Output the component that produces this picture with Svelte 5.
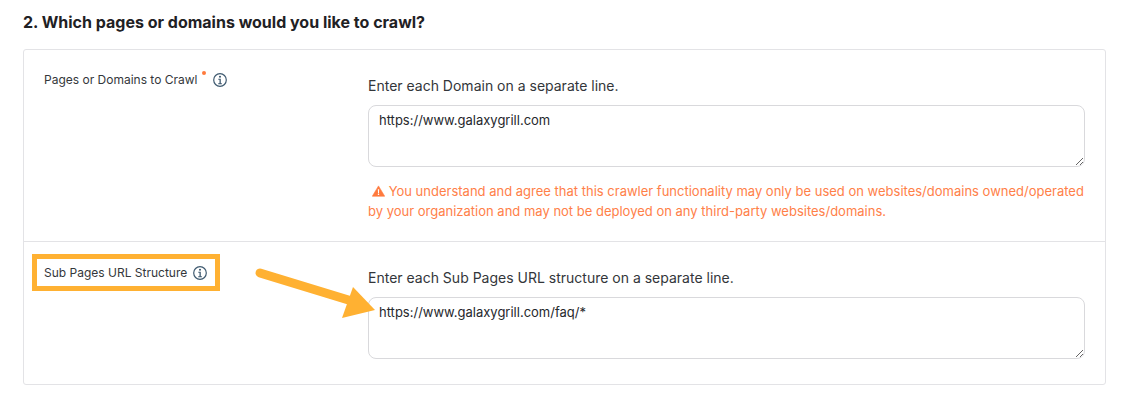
<script>
  const rows = [
    {
      label: 'Pages or Domains to Crawl',
      required: true,
      hint: 'Enter each Domain on a separate line.',
      value: 'https://www.galaxygrill.com',
      warning: 'You understand and agree that this crawler functionality may only be used on websites/domains owned/operated by your organization and may not be deployed on any third-party websites/domains.'
    },
    {
      label: 'Sub Pages URL Structure',
      required: false,
      hint: 'Enter each Sub Pages URL structure on a separate line.',
      value: 'https://www.galaxygrill.com/faq/*',
      highlight: true
    }
  ];
</script>

<div class="page">
  <h2>2. Which pages or domains would you like to crawl?</h2>
  <div class="card">
    {#each rows as row}
      <div class="row">
        <div class="label-col">
          <div class="label" class:highlight={row.highlight}>
            <span>{row.label}</span>
            {#if row.required}<i class="req"></i>{/if}
            <svg class="info" viewBox="0 0 14 14" width="14" height="14" aria-hidden="true">
              <circle cx="7" cy="7" r="6.300" fill="none" stroke="#3f5a70" stroke-width="1.200" />
              <circle cx="7" cy="3.800" r="1.050" fill="#3f5a70" />
              <path d="M5.300 5.800h2.500v4.400h1.100v1H5.200v-1h1.300V6.800H5.300z" fill="#3f5a70" />
            </svg>
          </div>
        </div>
        <div class="field">
          <p class="hint">{row.hint}</p>
          <textarea value={row.value}></textarea>
          {#if row.warning}
            <p class="warning">
              <svg viewBox="0 0 14 12" width="13" height="12" aria-hidden="true">
                <path d="M7 .5 13.700 11.700H.3z" fill="#ff7a3d" stroke="#ff7a3d" stroke-linejoin="round" stroke-width=".6" />
                <path d="M6.300 4h1.400l-.2 4.300h-1zM6.300 9h1.400v1.300H6.300z" fill="#fff" />
              </svg>
              {row.warning}
            </p>
          {/if}
        </div>
      </div>
    {/each}
  </div>

  <svg class="arrow" viewBox="0 0 130 60" width="130" height="60" aria-hidden="true">
    <path d="M8 11 103 40" fill="none" stroke="#ffb132" stroke-width="9" stroke-linecap="round" />
    <path d="M123 48 101 25 90 56z" fill="#ffb132" />
  </svg>
</div>

<style>
  :global(body) {
    margin: 0;
    background: #fff;
    font-family: Inter, "Noto Sans", sans-serif;
    color: #26282c;
  }

  .page {
    position: relative;
    width: 1134px;
    height: 402px;
    padding: 14px 28px 0 23px;
    box-sizing: border-box;
    overflow: hidden;
  }

  h2 {
    margin: 0 0 18px;
    font-size: 16px;
    line-height: 17px;
    font-weight: 700;
    color: #1f2124;
  }

  .card {
    border: 1px solid #e3e3e6;
    border-radius: 3px;
  }

  .row {
    display: grid;
    grid-template-columns: 324px 1fr;
    padding: 16px 20px 20px 20px;
  }

  .row + .row {
    border-top: 1px solid #e3e3e6;
    padding-bottom: 25px;
  }

  .label {
    display: flex;
    align-items: center;
    font-size: 12px;
    line-height: 14px;
    color: #34373b;
    height: 28px;
  }

  .highlight {
    width: fit-content;
    margin: -4px 0 0 -12px;
    padding: 0 8px 0 7px;
    height: 27px;
    border: 5px solid #ffb132;
  }

  .req {
    width: 4px;
    height: 4px;
    margin: -14px 0 0 4px;
    border-radius: 50%;
    background: #ff7a3d;
  }

  .req + .info {
    margin-left: 7px;
  }

  .info {
    margin-left: 6px;
    flex: none;
  }

  .hint {
    margin: 11px 0 11px;
    font-size: 14px;
    line-height: 17px;
    color: #33363a;
  }

  textarea {
    display: block;
    box-sizing: border-box;
    width: 100%;
    height: 62px;
    padding: 6px 10px;
    border: 1px solid #d9d9dc;
    border-radius: 8px;
    font: 13px/17px Inter, "Noto Sans", sans-serif;
    color: #26282c;
    background: #fff;
    outline: none;
  }

  .warning {
    margin: 14px 0 0;
    font-size: 13px;
    line-height: 20px;
    color: #ff8048;
  }

  .warning svg {
    margin-left: 4px;
    vertical-align: -1px;
  }

  .arrow {
    position: absolute;
    left: 252px;
    top: 262px;
  }
</style>
